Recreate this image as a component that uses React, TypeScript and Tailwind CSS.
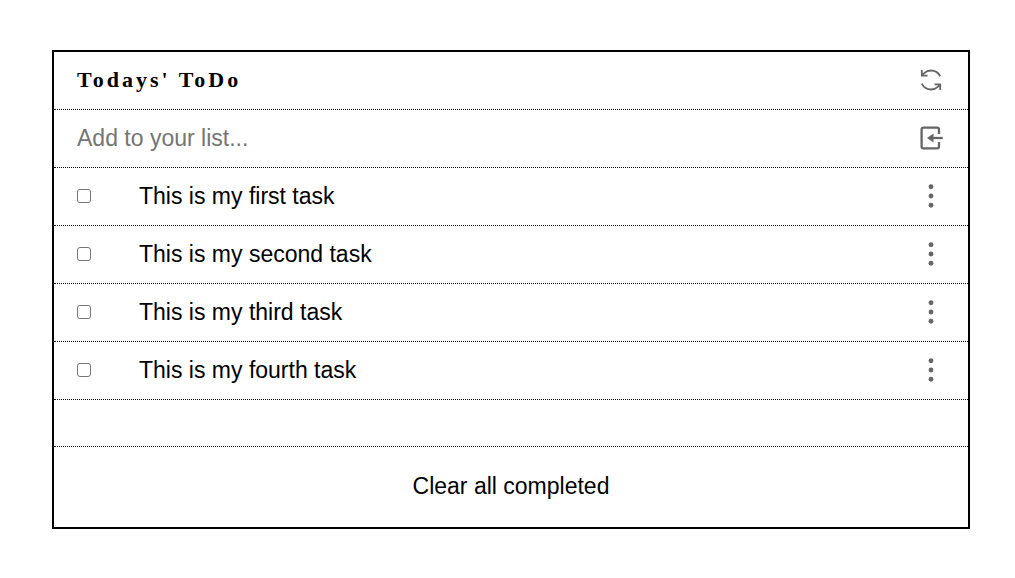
import { useState } from 'react';
import type { FormEvent } from 'react';

type Task = { id: number; text: string; done: boolean };

const initialTasks: Task[] = [
  { id: 1, text: 'This is my first task', done: false },
  { id: 2, text: 'This is my second task', done: false },
  { id: 3, text: 'This is my third task', done: false },
  { id: 4, text: 'This is my fourth task', done: false },
];

const row = 'flex h-[58px] items-center border-b border-dotted border-black pr-6 pb-0.5 pl-[23px]';

function RefreshIcon() {
  return (
    <svg viewBox="0 0 26 26" className="size-[26px]" fill="none" stroke="currentColor" strokeWidth="1.8" aria-hidden="true">
      <path d="M3.800 3V8.700H9.500M3.800 8.700L6.200 6.200C8 4.500 10.300 3.500 13 3.500C17 3.500 20.300 5.700 22.200 9.400" />
      <path d="M22.200 23V17.300H16.500M22.200 17.300L19.800 19.800C18 21.500 15.700 22.500 13 22.500C9 22.500 5.700 20.300 3.800 16.600" />
    </svg>
  );
}

function EnterIcon() {
  return (
    <svg viewBox="0 0 26 26" className="size-[26px]" fill="none" stroke="currentColor" strokeWidth="2.3" aria-hidden="true">
      <path d="M21 9V4.500Q21 2.700 19.200 2.700H5.400Q3.600 2.700 3.600 4.500V21.500Q3.600 23.300 5.400 23.300H19.200Q21 23.300 21 21.500V17" />
      <path d="M14 13H24.800" />
      <path d="M9 13L15.500 8.600V17.400Z" fill="currentColor" stroke="none" />
    </svg>
  );
}

function DotsIcon() {
  return (
    <svg viewBox="0 0 26 26" className="size-[26px]" fill="currentColor" aria-hidden="true">
      <circle cx="13" cy="3.700" r="2.450" />
      <circle cx="13" cy="13" r="2.450" />
      <circle cx="13" cy="22.300" r="2.450" />
    </svg>
  );
}

export default function App() {
  const [tasks, setTasks] = useState<Task[]>(initialTasks);
  const [draft, setDraft] = useState('');

  const add = (event: FormEvent) => {
    event.preventDefault();
    if (!draft.trim()) return;
    setTasks([...tasks, { id: Date.now(), text: draft.trim(), done: false }]);
    setDraft('');
  };

  const toggle = (id: number) =>
    setTasks(tasks.map((task) => (task.id === id ? { ...task, done: !task.done } : task)));

  return (
    <main className="min-h-screen bg-white pt-[50px] pr-[45px] pb-12 pl-[52px] font-['Liberation_Sans',Arial,sans-serif] text-[23px] leading-7 text-black">
      <section className="border-2 border-black">
        <header className={row}>
          <h1 className="flex-1 font-['Liberation_Serif','Times_New_Roman',serif] text-[22px] font-bold tracking-[3px]">
            Todays' ToDo
          </h1>
          <button type="button" aria-label="Refresh" onClick={() => setTasks(initialTasks)} className="text-[#666]">
            <RefreshIcon />
          </button>
        </header>
        <form onSubmit={add} className={row}>
          <input
            type="text"
            aria-label="Add to your list"
            placeholder="Add to your list..."
            value={draft}
            onChange={(event) => setDraft(event.target.value)}
            className="min-w-0 flex-1 placeholder:text-[#757575] focus:outline-none"
          />
          <button type="submit" aria-label="Add task" className="text-[#666]">
            <EnterIcon />
          </button>
        </form>
        <ul>
          {tasks.map((task) => (
            <li key={task.id} className={row}>
              <label className="flex flex-1 items-center gap-12">
                <input
                  type="checkbox"
                  checked={task.done}
                  onChange={() => toggle(task.id)}
                  className="size-[14px] appearance-none rounded-[3px] border border-[#767676] bg-white checked:bg-[#767676]"
                />
                <span>{task.text}</span>
              </label>
              <button type="button" aria-label="Task options" className="text-[#666]">
                <DotsIcon />
              </button>
            </li>
          ))}
        </ul>
        <div className="h-[47px] border-b border-dotted border-black" />
        <footer className="flex h-20 items-center justify-center pb-0.5">
          <button type="button" onClick={() => setTasks(tasks.filter((task) => !task.done))}>
            Clear all completed
          </button>
        </footer>
      </section>
    </main>
  );
}
